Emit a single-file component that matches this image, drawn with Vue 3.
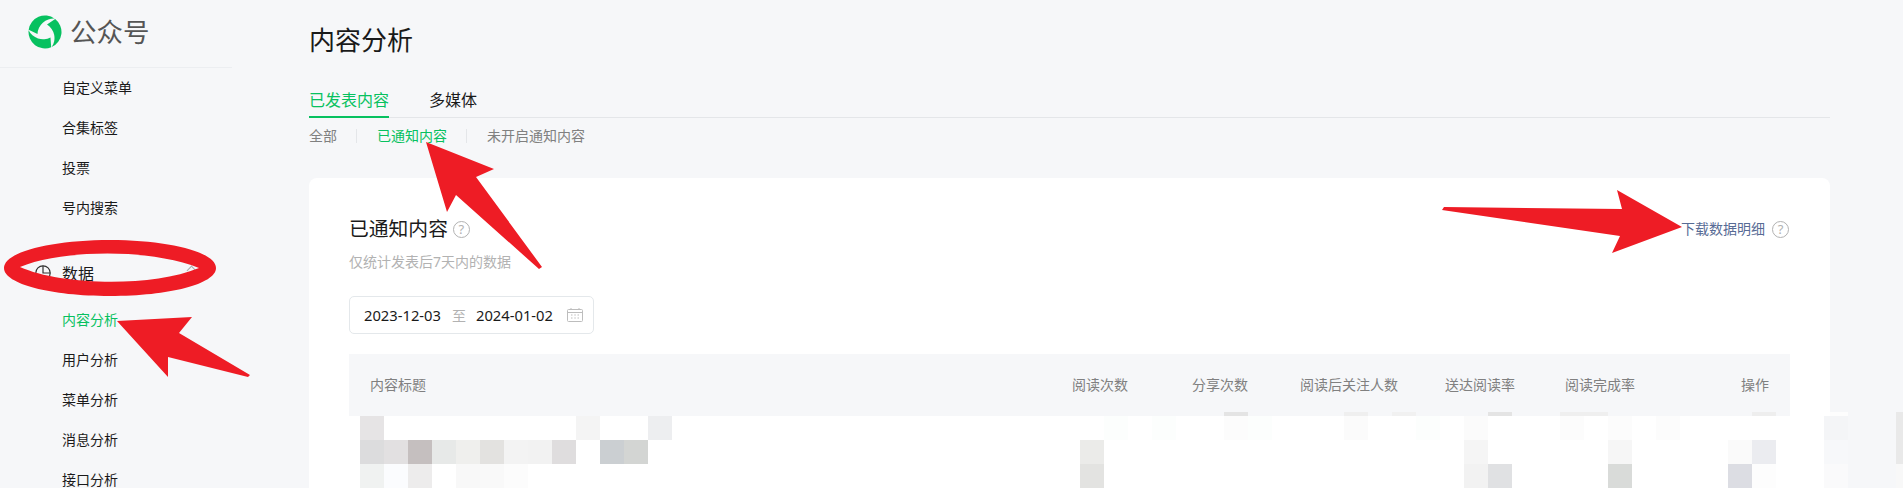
<template>
  <div class="page">
    <aside class="sidebar">
      <div class="logo">
        <svg class="logo-mark" width="34" height="34" viewBox="0 0 34 34" fill="#07c160">
          <path
            v-for="a in [0, 120, 240]"
            :key="a"
            :transform="`rotate(${a} 17 17)`"
            d="M0.66 14.7A16.5 16.5 0 0 1 26.7 3.65A16 16 0 0 0 9.5 19Z"
          />
        </svg>
        <span class="logo-text">公众号</span>
      </div>
      <ul class="menu">
        <li v-for="item in topMenu" :key="item">{{ item }}</li>
      </ul>
      <div class="group">
        <svg width="16" height="16" viewBox="0 0 16 16" fill="none" stroke="#333" stroke-width="1.2">
          <circle cx="8" cy="8" r="7.2" />
          <path d="M8 0.8V8H15.2" />
        </svg>
        <span>数据</span>
        <i class="caret"></i>
      </div>
      <ul class="menu">
        <li
          v-for="item in dataMenu"
          :key="item"
          :class="{ active: item === '内容分析' }"
        >
          {{ item }}
        </li>
      </ul>
    </aside>

    <main class="main">
      <h1 class="title">内容分析</h1>
      <div class="tabs">
        <a class="tab active">已发表内容</a>
        <a class="tab">多媒体</a>
      </div>
      <div class="subnav">
        <a>全部</a>
        <a class="active">已通知内容</a>
        <a>未开启通知内容</a>
      </div>

      <section class="card">
        <div class="card-head">
          <div>
            <h2>已通知内容<span class="help big">?</span></h2>
            <p class="hint">仅统计发表后7天内的数据</p>
          </div>
          <div class="download">下载数据明细<span class="help">?</span></div>
        </div>

        <div class="range">
          <span class="date">2023-12-03</span>
          <span class="to">至</span>
          <span class="date">2024-01-02</span>
          <svg width="16" height="14" viewBox="0 0 16 14" fill="none" stroke="#bdbdbd">
            <rect x="0.5" y="1.5" width="15" height="12" rx="1" />
            <path d="M0.5 4.5H15.5M4 0V2M12 0V2" />
            <path d="M4 7H5.5M7.3 7H8.8M10.5 7H12M4 10H5.5M7.3 10H8.8M10.5 10H12" />
          </svg>
        </div>

        <div class="table-head">
          <span v-for="col in columns" :key="col">{{ col }}</span>
        </div>
      </section>
    </main>

    <svg class="mosaic" width="1903" height="488">
      <rect
        v-for="(c, i) in mosaic"
        :key="i"
        :x="c[0]"
        :y="c[1]"
        :width="c[3] || 24"
        :height="c[4] || 24"
        :fill="c[2]"
      />
    </svg>

    <svg class="marks" width="1903" height="488">
      <path
        fill-rule="evenodd"
        d="M4 268C4 252 51 240 110 240C169 240 216 252 216 268C216 284 169 296 110 296C51 296 4 284 4 268ZM20 267C60 285 150 288 199 268C150 248 60 250 20 267Z"
      />
      <path d="M117 321L192 317L179 333L250 375L248 377L168 357L168 377Z" />
      <path d="M426 142L494 169L476 177L542 267L539 269L456 195L447 212Z" />
      <path d="M1682 227L1617 190L1622 209L1444 207L1442 210L1620 236L1612 253Z" />
    </svg>
  </div>
</template>

<script setup>
const topMenu = ['自定义菜单', '合集标签', '投票', '号内搜索'];
const dataMenu = ['内容分析', '用户分析', '菜单分析', '消息分析', '接口分析'];
const columns = ['内容标题', '阅读次数', '分享次数', '阅读后关注人数', '送达阅读率', '阅读完成率', '操作'];

// 打码区域: x, y, 颜色, 宽, 高
const mosaic = [
  [360, 416, '#e6e4e5'], [576, 416, '#f4f4f4'], [648, 416, '#edeef0'],
  [360, 440, '#dcdcdd'], [384, 440, '#e2e0e1'], [408, 440, '#c5bfbf'], [432, 440, '#e7e9e8'],
  [456, 440, '#efefed'], [480, 440, '#e3e2e0'], [504, 440, '#f3f3f3'], [528, 440, '#f2f2f2'],
  [552, 440, '#dfddde'], [600, 440, '#cbcfd2'], [624, 440, '#d3d5d3'],
  [360, 464, '#f0f2f1'], [384, 464, '#fbfcfe'], [408, 464, '#edecec'], [456, 464, '#f8f8f8'],
  [480, 464, '#f9f9f9'], [504, 464, '#fcfcfc'],
  [1080, 440, '#ebebe9'], [1080, 464, '#e3e3e1'],
  [1104, 416, '#fcfefd'], [1152, 416, '#fcfefd'], [1248, 416, '#fcfefd'], [1416, 416, '#fcfefd'],
  [1224, 412, '#e4e4e4', 24, 4], [1224, 416, '#fcfcfc'],
  [1344, 412, '#efefef', 24, 4], [1344, 416, '#fbfbfb'], [1392, 412, '#f1f1f1', 24, 4],
  [1464, 416, '#fbfbfb'], [1464, 440, '#f5f5f5'], [1464, 464, '#f2f2f2'],
  [1488, 412, '#e4e4e4', 24, 4], [1488, 464, '#e0e1e3'],
  [1560, 412, '#efefef', 48, 4], [1560, 416, '#fcfcfc'],
  [1608, 416, '#fcfcfc'], [1608, 440, '#f6f6f6'], [1608, 464, '#d9dbd9'],
  [1656, 416, '#fcfcfc'],
  [1728, 440, '#fafafa'], [1728, 464, '#dcdde3'],
  [1752, 412, '#eeeeee', 24, 4], [1752, 440, '#ebecf0'], [1752, 464, '#fdfdfd'],
  [1790, 412, '#ffffff', 40, 4], [1830, 412, '#fdfdfd', 18, 4],
  [1824, 416, '#f4f5f7'], [1824, 440, '#f7f8fa'], [1824, 464, '#fafafb'],
  [1896, 412, '#e9e9e9', 7, 52], [1896, 464, '#f8f8f8', 7, 24],
];
</script>

<style>
html,
body {
  margin: 0;
  background: #f6f7f9;
}
</style>

<style scoped>
.page {
  position: relative;
  display: flex;
  height: 488px;
  overflow: hidden;
  background: #f6f7f9;
  color: #1a1a1a;
  font-family: "Noto Sans", "Noto Sans CJK SC", sans-serif;
  font-size: 14px;
}

/* 左侧菜单 */
.sidebar {
  flex: none;
  width: 232px;
}
.logo {
  display: flex;
  align-items: center;
  height: 68px;
  padding-left: 28px;
  box-sizing: border-box;
  border-bottom: 1px solid #eceef1;
}
.logo-mark {
  margin-bottom: 3px;
}
.logo-text {
  margin-left: 8px;
  font-size: 26.5px;
  line-height: 34px;
  color: #555;
  margin-bottom: 3px;
}
.menu {
  margin: 0;
  padding: 0;
  list-style: none;
}
.menu li {
  height: 40px;
  padding-left: 62px;
  line-height: 40px;
}
.menu li.active {
  color: #07c160;
}
.group {
  display: flex;
  align-items: center;
  gap: 11px;
  position: relative;
  height: 40px;
  margin-top: 25px;
  margin-bottom: 7px;
  padding-left: 35px;
  font-size: 16px;
}
.caret {
  position: absolute;
  left: 188px;
  top: 14px;
  width: 6px;
  height: 6px;
  border-left: 1px solid #aaa;
  border-top: 1px solid #aaa;
  transform: rotate(45deg);
}

/* 主体 */
.main {
  flex: 1;
  padding: 0 73px 0 77px;
  min-width: 0;
}
.title {
  margin: 20px 0 0;
  font-size: 26px;
  font-weight: 400;
  line-height: 40px;
}
.tabs {
  display: flex;
  gap: 40px;
  height: 58px;
  box-sizing: border-box;
  align-items: flex-end;
  border-bottom: 1px solid #e4e6e9;
}
.tab {
  padding-bottom: 2px;
  margin-bottom: -1px;
  height: 32px;
  box-sizing: border-box;
  font-size: 16px;
  line-height: 28px;
  border-bottom: 2px solid transparent;
}
.tab.active {
  color: #07c160;
  border-color: #07c160;
}
.subnav {
  display: flex;
  align-items: center;
  margin-top: 11px;
  margin-bottom: 35px;
  height: 14px;
  color: #808080;
}
.subnav a {
  padding: 0 19px 0 20px;
  border-left: 1px solid #e4e6e9;
  line-height: 14px;
}
.subnav a:first-child {
  padding: 0 19px 0 0;
  border-left: none;
}
.subnav a.active {
  color: #07c160;
}

/* 卡片 */
.card {
  height: 400px;
  padding: 39px 40px 0;
  background: #fff;
  border-radius: 8px;
}
.card-head {
  display: flex;
  justify-content: space-between;
  align-items: flex-start;
}
.card-head h2 {
  display: flex;
  align-items: center;
  margin: 0;
  font-size: 19.8px;
  font-weight: 400;
  line-height: 24px;
}
.hint {
  margin: 9px 0 0;
  color: #b2b2b2;
  line-height: 24px;
}
.help {
  display: inline-block;
  width: 17px;
  height: 17px;
  margin-left: 7px;
  box-sizing: border-box;
  border: 1px solid #b2b2b2;
  border-radius: 50%;
  color: #b2b2b2;
  font-size: 13px;
  line-height: 15px;
  text-align: center;
}
.help.big {
  margin-left: 5px;
}
.download {
  display: flex;
  align-items: center;
  padding-right: 1px;
  color: #576b95;
  line-height: 24px;
}
.range {
  display: flex;
  align-items: center;
  width: 245px;
  height: 38px;
  margin-top: 22px;
  padding: 0 10px 0 14px;
  box-sizing: border-box;
  border: 1px solid #e4e8eb;
  border-radius: 5px;
  white-space: nowrap;
}
.date {
  font-size: 14.75px;
}
.to {
  margin: 0 10px 0 11px;
  color: #b2b2b2;
}
.range svg {
  flex: none;
  margin-left: auto;
}
.table-head {
  display: grid;
  grid-template-columns: 1fr 120px 120px 150px 117px 120px 134px;
  align-items: center;
  height: 62px;
  margin-top: 20px;
  padding: 0 21px 2px 21px;
  box-sizing: border-box;
  background: #f6f7f9;
  color: #808080;
}
.table-head span:not(:first-child) {
  text-align: right;
}

/* 打码和标注 */
.mosaic,
.marks {
  position: absolute;
  top: 0;
  left: 0;
  pointer-events: none;
}
.mosaic rect {
  shape-rendering: crispEdges;
}
.marks path {
  fill: #ee1c25;
}
</style>
